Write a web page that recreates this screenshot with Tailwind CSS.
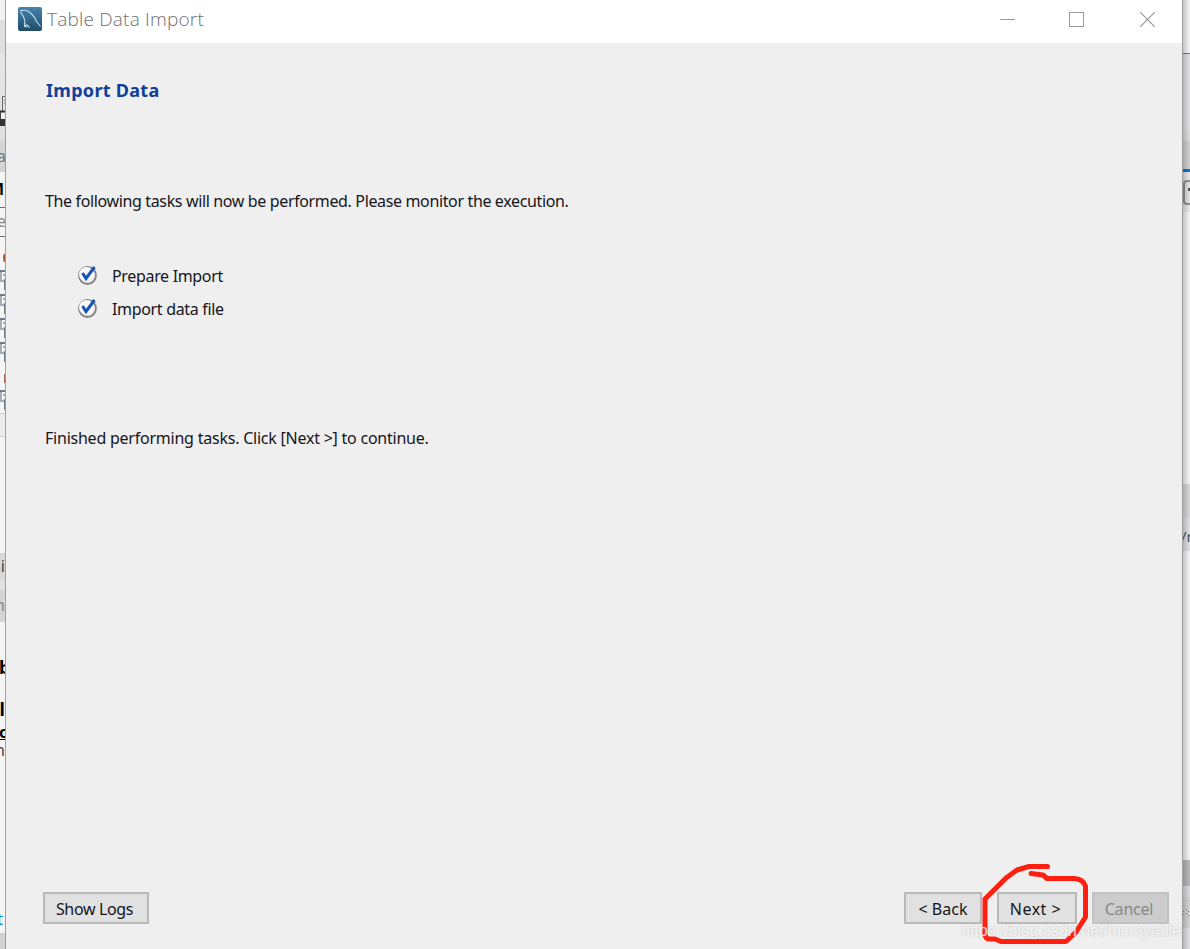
<!doctype html>
<html lang="en">
  <head>
    <meta charset="UTF-8" />
    <meta name="viewport" content="width=device-width, initial-scale=1.0" />
    <title>Table Data Import</title>
    <script src="https://cdn.jsdelivr.net/npm/@tailwindcss/browser@4"></script>
  </head>
  <body class="h-[949px] w-[1190px] overflow-hidden bg-[#f5f5f5] font-['Noto_Sans',sans-serif] text-base text-[#15151c]">
    <div class="relative flex h-full">
      <!-- Sliver of the application behind, left -->
      <div class="flex w-[5px] shrink-0 flex-col overflow-hidden bg-[#f5f5f5] text-[16px] leading-none whitespace-nowrap">
        <div class="h-[20px] bg-[#f3f3f3]"></div>
        <div class="h-[33px] bg-[#dfdfe1]"></div>
        <div class="h-[88px] bg-linear-to-b from-[#e7e7ea] to-[#dededf] pt-[42px]">
          <svg width="6" height="31" viewBox="0 0 6 31" fill="none">
            <path d="M6 1.5H2.5V16" stroke="#666" />
            <path d="M4 5h2M4 8h2" stroke="#777" />
            <path d="M0 16.5h6" stroke="#333" stroke-width="2" />
            <rect x="0" y="18" width="6" height="6" fill="#eee" />
            <path d="M.5 17v8" stroke="#444" />
            <rect y="24" width="6" height="7" fill="#333" />
          </svg>
        </div>
        <div class="h-[31px] bg-[#d5d5d5] pt-[7px] text-[#777]"><span class="-ml-[3px]">a</span></div>
        <div class="h-[35px] pt-[9px] font-bold text-black"><span class="-ml-[11px]">M</span></div>
        <div class="h-[30px] border-y border-[#707070] pt-[5px] text-[#888]"><span class="-ml-[3px]">e</span></div>
        <div class="h-[176px]">
          <svg width="5" height="176" viewBox="0 0 5 176">
            <path d="M5 17q-2 3 0 8" fill="none" stroke="#a55a33" stroke-width="2" />
            <g fill="none" stroke="#707b8a">
              <path d="M0 34h5" stroke-width="2" /><path d="M1 35v9h4M5 38H3" stroke="#a5adb8" stroke-width="2" /><path d="M4.5 42v11" />
              <path d="M0 58h5" stroke-width="2" /><path d="M1 59v9h4M5 62H3" stroke="#a5adb8" stroke-width="2" /><path d="M4.5 66v11" />
              <path d="M0 82h5" stroke-width="2" /><path d="M1 83v9h4M5 86H3" stroke="#a5adb8" stroke-width="2" /><path d="M4.5 90v11" />
              <path d="M0 106h5" stroke-width="2" /><path d="M1 107v9h4M5 110H3" stroke="#a5adb8" stroke-width="2" /><path d="M4.5 114v11" />
              <path d="M0 154h5" stroke-width="2" /><path d="M1 155v9h4M5 158H3" stroke="#a5adb8" stroke-width="2" /><path d="M4.5 162v11" />
            </g>
            <path d="M4.500 137v9" stroke="#9a6650" />
          </svg>
        </div>
        <div class="h-[24px] border-y border-[#d0d0d0] bg-[#ebebeb]"></div>
        <div class="h-[116px]"></div>
        <div class="flex h-[27px] justify-end bg-[#d8d8d8] pt-[5px] text-[#444]">ni</div>
        <div class="h-[10px] bg-[#e0e0e0]"></div>
        <div class="flex h-[32px] justify-end bg-[#d5d5d5] pt-[7px] text-[#888]">n</div>
        <div class="h-[78px] pt-[36px] text-[18px] font-bold text-black"><span class="-ml-px">b</span></div>
        <div class="flex h-[24px] justify-end text-[18px] font-bold text-black">ol</div>
        <div class="h-[18px] text-[16px] font-bold text-black underline"><span class="-ml-px">c</span></div>
        <div class="flex h-[168px] justify-end text-[#444]">n</div>
        <div class="h-[23px] text-[17px] text-[#1a86cc]"><span class="-ml-[3px]">t</span></div>
        <div class="flex-1 bg-[#d2d2d5]"></div>
      </div>

      <!-- Wizard window -->
      <main class="flex w-[1178px] shrink-0 flex-col border-x border-x-[#a0a0a0] bg-[#efefef]">
        <header class="flex h-[43px] shrink-0 items-start bg-white">
          <svg class="mt-[7px] ml-[12px]" width="24" height="24" viewBox="0 0 24 24" fill="none">
            <defs>
              <linearGradient id="logo" x2="0" y2="1">
                <stop stop-color="#4385ad" />
                <stop offset="1" stop-color="#204c68" />
              </linearGradient>
            </defs>
            <rect width="24" height="24" rx="2" fill="url(#logo)" />
            <path d="M8.500 20.500L6.500 16.500L7 13.500L5.500 10L3 5.500Q2 3 4.500 3.500Q9 2.500 13 6.500Q17 10 18.500 14.500L22.500 19.500M7 16l-.5 3.500 2.500-1.500 2.500 2.500" stroke="#c5dbe5" stroke-width="1.100" />
          </svg>
          <h1 class="mt-[5px] ml-[5px] font-['Open_Sans',sans-serif] text-[19px] leading-[28px] font-light whitespace-nowrap text-[#707070]"><span class="tracking-[0.2px]">Table Data Import</span></h1>
          <div class="mr-[27px] ml-auto flex pt-[12px] text-[#999]">
            <svg class="mr-[54px]" width="15" height="15" stroke="currentColor"><path d="M0 7.500h15" /></svg>
            <svg class="mr-[56px]" width="15" height="15" fill="none" stroke="currentColor"><rect x=".5" y=".5" width="14" height="14" /></svg>
            <svg width="15" height="15" stroke="currentColor" stroke-width="1.200"><path d="M0 0l15 15M15 0L0 15" /></svg>
          </div>
        </header>

        <section class="flex-1 pl-[39px] leading-[24px] whitespace-nowrap">
          <h2 class="pt-[35px] pl-px text-[18px] font-bold text-[#103f9b]"><span class="tracking-[0.3px]">Import Data</span></h2>
          <p class="mt-[87px]"><span class="tracking-[-0.36px]">The following tasks will now be performed. Please monitor the execution.</span></p>
          <ul class="mt-[51px] ml-[32px] flex flex-col gap-[9px]">
            <li class="flex items-center gap-[14px]">
              <svg class="-mt-[2px] shrink-0" width="21" height="22" viewBox="0 0 21 22" fill="none">
                <circle cx="10.500" cy="11.500" r="8.500" fill="#e5e5e5" stroke="#848484" stroke-width="1.800" />
                <circle cx="9.500" cy="10.500" r="7.500" fill="#fafafa" />
                <path d="M5.500 9L9 14.500L17.500 3" stroke="#1456b8" stroke-width="3" />
              </svg>
              <span class="tracking-[-0.33px]">Prepare Import</span>
            </li>
            <li class="flex items-center gap-[14px]">
              <svg class="-mt-[2px] shrink-0" width="21" height="22" viewBox="0 0 21 22" fill="none">
                <circle cx="10.500" cy="11.500" r="8.500" fill="#e5e5e5" stroke="#848484" stroke-width="1.800" />
                <circle cx="9.500" cy="10.500" r="7.500" fill="#fafafa" />
                <path d="M5.500 9L9 14.500L17.500 3" stroke="#1456b8" stroke-width="3" />
              </svg>
              <span class="tracking-[-0.33px]">Import data file</span>
            </li>
          </ul>
          <p class="mt-[105px]"><span class="tracking-[-0.23px]">Finished performing tasks. Click [Next &gt;] to continue.</span></p>
        </section>

        <footer class="flex h-[57px] shrink-0 items-start pr-[13px] pl-[37px] whitespace-nowrap">
          <button class="h-[32px] w-[106px] border-2 border-[#b9b9b9] bg-[#e1e1e1] pt-[2px] pr-[3px]"><span class="tracking-[-0.35px]">Show Logs</span></button>
          <button class="ml-auto h-[32px] w-[78px] border-2 border-[#b9b9b9] bg-[#e1e1e1] pt-[2px]">&lt; Back</button>
          <button class="ml-[15px] h-[32px] w-[80px] border-2 border-[#b9b9b9] bg-[#e1e1e1] pt-[2px] pr-[3px]"><span class="tracking-[0.5px]">Next &gt;</span></button>
          <button class="ml-[15px] h-[32px] w-[77px] border-2 border-[#c1c1c1] bg-[#cccccc] pt-[2px] pr-[3px] text-[#888]" disabled><span class="tracking-[-0.2px]">Cancel</span></button>
        </footer>
      </main>

      <!-- Sliver of the application behind, right -->
      <div class="relative flex w-[7px] shrink-0 flex-col overflow-hidden bg-[#f6f6f6] whitespace-nowrap">
        <div class="h-[54px] shrink-0 border-b border-[#777]"></div>
        <div class="h-[77px] shrink-0 bg-[#e3e3e6]"></div>
        <div class="h-[10px] shrink-0 bg-[#dedede]"></div>
        <div class="h-[28px] shrink-0 bg-[#d2d2d2]"></div>
        <div class="h-[3px] shrink-0 bg-[#1276c9]"></div>
        <div class="h-[40px] shrink-0 bg-[#e9e9e9] pt-[8px]">
          <div class="h-[25px] w-[20px] rounded border-2 border-[#929292] bg-[#e3e3e3] pt-[6px] pl-[3px]">
            <div class="h-[3px] w-[4px] bg-[#555]"></div>
          </div>
        </div>
        <div class="h-[272px] shrink-0"></div>
        <div class="h-[33px] shrink-0 bg-[#dadada]"></div>
        <div class="h-[34px] shrink-0 bg-[#e2e2e4] pt-[10px] text-[15px] leading-[18px] text-[#555]"><span class="-ml-[2px]">/r</span></div>
        <div class="h-[309px] shrink-0"></div>
        <div class="h-[26px] shrink-0 bg-[#bababa]"></div>
        <div class="h-[11px] shrink-0 bg-[#dddde0]"></div>
        <div class="h-[31px] shrink-0 bg-[#d5d5d5] pt-[11px]">
          <svg width="7" height="9" fill="#888"><path d="M0 3h1v1H0zM0 6h1v1H0zM3 1h1v1H3zM3 5h1v1H3zM5 3h1v1H5zM5 7h1v1H5z" /></svg>
        </div>
        <div class="flex-1 bg-[#e3e3e5]"></div>
        <div class="absolute inset-y-0 left-0 w-full bg-linear-to-r from-black/20 to-transparent"></div>
      </div>

      <!-- Pen mark around the Next button -->
      <svg class="pointer-events-none absolute top-0 left-0" width="1190" height="949" fill="none" stroke="#ff2012" stroke-width="5" stroke-linecap="round" stroke-linejoin="round">
        <path d="M1047.500 866.500H1029L1017 870L1006 878L985 899V930Q984 937 988 939H995L1001 941.500H1066L1076 932L1085.500 917V886Q1083 879 1074 878.500H1047L1043 875L1031 873.500" />
      </svg>
      <div class="absolute top-[920px] left-[961px] font-['Liberation_Sans',sans-serif] text-[16px] leading-[22px] whitespace-nowrap text-white/75 text-shadow-[0_0_2px_#99999999]"><span class="tracking-[-0.05px]">https://blog.csdn.net/Incroyable</span></div>
    </div>
  </body>
</html>
